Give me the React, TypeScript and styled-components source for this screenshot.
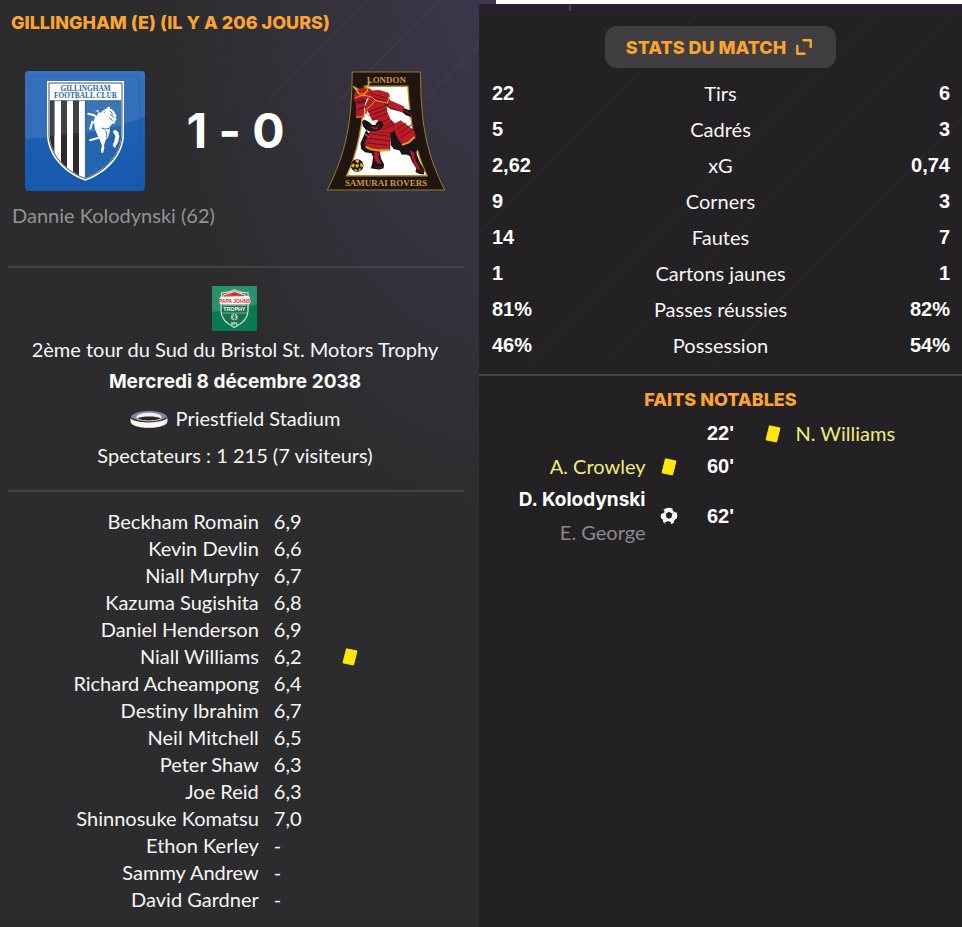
import React from "react";
import styled, { createGlobalStyle } from "styled-components";

const GlobalStyle = createGlobalStyle`
  *, *::before, *::after { box-sizing: border-box; }
  html, body, #root { min-height: 100vh; }
  body {
    margin: 0;
    background: #29282b;
    color: #f8f6f4;
    font-family: Lato, sans-serif;
    font-size: 20px;
    font-variant-ligatures: none;
    line-height: 27px;
  }
  h1, h2, p, ul { margin: 0; padding: 0; }
`;

const Page = styled.div`
  display: grid;
  grid-template-columns: 479fr 483fr;
  min-height: 100vh;
`;

const MatchPanel = styled.main`
  padding: 9px 15px 12px 8px;
  background:
    linear-gradient(135deg, transparent 258px, #ffffff06 260px, transparent 262px, transparent 309px, #ffffff08 311px, transparent 313px, transparent 369px, #ffffff07 371px, transparent 373px) 0 0 / 100% 100px no-repeat,
    radial-gradient(ellipse 330px 520px at 104% 0, #3c364e 0%, #36333f 40%, #2c2c2e 100%);
`;

const DetailColumn = styled.div`
  display: flex;
  flex-direction: column;
`;

const TopEdge = styled.div`
  height: 4px;
  margin-left: 17px;
  background: #fff;
`;

const EdgeRow = styled.div`
  background: #3c374c;
`;

const DetailPanel = styled.aside`
  flex: 1;
  padding-top: 22px;
  background:
    linear-gradient(#4a474c, #4a474c) 90px 0 / 2px 7px no-repeat,
    linear-gradient(#291f31, #29213000) 0 0 / 100% 14px no-repeat,
    linear-gradient(135deg, transparent 160px, #ffffff04 162px, transparent 164px, transparent 286px, #ffffff04 288px, transparent 290px, transparent 344px, #ffffff03 346px, transparent 348px, transparent 420px, #ffffff04 422px, transparent 424px) 0 0 / 100% 360px no-repeat,
    #232124;
`;

const Heading = styled.h1`
  padding-left: 3px;
  color: #ffa42e;
  font-family: Inter, sans-serif;
  font-size: 18px;
  font-weight: 800;
  line-height: 28px;
`;

const SectionHeading = styled(Heading).attrs({ as: "h2" })`
  padding: 10px 0 0;
  text-align: center;
`;

const ScoreRow = styled.div`
  display: flex;
  align-items: center;
  justify-content: space-between;
  padding: 0 18px 0 17px;
  margin-top: 34px;
`;

const Score = styled.p`
  font-family: Inter, sans-serif;
  font-size: 48px;
  font-weight: 700;
  line-height: 60px;
  color: #fff;
`;

const Scorer = styled.p`
  padding: 11px 4px 37px;
  color: #949395;
`;

const Rule = styled.hr`
  height: 2px;
  margin: 0;
  border: 0;
  background: #434245;
`;

const Venue = styled.section`
  display: flex;
  flex-direction: column;
  align-items: center;
  gap: 10px;
  padding: 18px 2px 21px 0;
  text-align: center;
`;

const Competition = styled.div`
  display: flex;
  flex-direction: column;
  align-items: center;
  gap: 5px;
`;

const MatchDate = styled.strong`
  font-family: Inter, sans-serif;
  font-size: 19px;
  font-weight: 700;
  color: #fff;
`;

const Stadium = styled.p`
  display: flex;
  align-items: center;
  gap: 8px;
`;

const Players = styled.table`
  width: 100%;
  margin-top: 16px;
  border-collapse: collapse;
  table-layout: fixed;

  th, td { padding: 0; height: 27px; font-weight: 400; text-align: left; }
  th { width: 55%; text-align: right; }
  td:nth-child(2) { width: 18%; padding-left: 15px; }
  svg { display: block; }
`;

const StatsButton = styled.button`
  display: flex;
  align-items: center;
  gap: 10px;
  height: 42px;
  margin: 0 auto;
  padding: 0 24px 0 21px;
  border: 0;
  border-radius: 12px;
  background: #403e40;
  color: #ffa42e;
  font-family: Inter, sans-serif;
  font-size: 18px;
  font-weight: 800;
`;

const Stats = styled.table`
  width: 100%;
  margin: 7px 0 11px;
  border-collapse: collapse;
  table-layout: fixed;

  th, td { height: 36px; padding: 0; }
  th { font-weight: 400; text-align: center; }
  td {
    width: 25%;
    padding: 0 12px 0 13px;
    font-family: "Liberation Sans", Arial, sans-serif;
    font-weight: 700;
    color: #fff;
  }
  td:last-child { text-align: right; }
`;

const Facts = styled.ul`
  list-style: none;
  margin-top: 3px;
`;

const Fact = styled.li`
  display: grid;
  grid-template-columns: 1fr 46px 58px 46px 1fr;
  align-items: center;
  line-height: 33px;
`;

const FactSide = styled.div<{ $home?: boolean }>`
  grid-column: ${(p) => (p.$home ? 1 : 5)};
  text-align: ${(p) => (p.$home ? "right" : "left")};
`;

const FactIcon = styled.span<{ $home?: boolean }>`
  grid-column: ${(p) => (p.$home ? 2 : 4)};
  display: flex;
  justify-content: center;
`;

const Minute = styled.time`
  grid-column: 3;
  grid-row: 1;
  font-family: "Liberation Sans", Arial, sans-serif;
  font-weight: 700;
  text-align: center;
  color: #fff;
`;

const FactName = styled.p`
  color: #efeb7c;
`;

const GoalScorer = styled(FactName)`
  font-family: Inter, sans-serif;
  font-size: 19px;
  font-weight: 700;
  color: #fff;
`;

const Assist = styled(FactName)`
  color: #8b898c;
`;

function CardIcon() {
  return (
    <svg width="18" height="20" viewBox="0 0 18 20" role="img" aria-label="Carton jaune">
      <path d="M5.5 1.8 16 4 12.5 18 2 15.8Z" fill="#ffe70b" stroke="#ffe70b" strokeWidth="1" strokeLinejoin="round" />
    </svg>
  );
}

function BallIcon() {
  return (
    <svg width="18" height="18" viewBox="0 0 54 54" role="img" aria-label="But">
      <circle cx="27" cy="27" r="25" fill="#fbf7f2" />
      <g fill="#19171b">
        <path d="m18 20 9-6 10 6-3 12-7 3-8-4Z" />
        <path d="M1 14 10 8l4 5-4 6-9 3ZM39 3l10 9 1 5-8-3-5-6ZM15 45l10-2 8 3-2 8H19ZM1 32l8 6-1 8-7-4ZM46 37l7-4v10l-9 6-3-5Z" />
        <path d="m12 14 7 7M37 20l7-6M34 31l9 8M20 31l-9 7" stroke="#6c696d" strokeWidth="1" />
      </g>
    </svg>
  );
}

function ExpandIcon() {
  return (
    <svg width="16" height="16" viewBox="0 0 16 16" fill="none" stroke="#ffa42e" strokeWidth="2.4" strokeLinecap="round" strokeLinejoin="round" aria-hidden="true">
      <path d="M7.5 1.3h7.2V8M1.3 7v7.7H8.5" />
    </svg>
  );
}

function StadiumIcon() {
  return (
    <svg width="38" height="18" viewBox="0 0 114 54" aria-hidden="true">
      <path d="M2 23C4 -4 110 -4 112 23V34C108 59 5 59 2 34Z" fill="#8580ae" />
      <path d="M2 24C20 42 94 42 112 24V35C108 59 5 59 2 35Z" fill="#fcf8ed" />
      <path d="M2 21C20 38 94 38 112 21L111 25C94 40 20 40 3 26Z" fill="#26242b" />
      <ellipse cx="57" cy="21" rx="38" ry="13" fill="#f6f0e8" />
      <path d="M22 25C37 18 79 18 92 25 80 34 34 34 22 25Z" fill="#29282b" />
    </svg>
  );
}

function GillinghamBadge() {
  return (
    <svg width="120" height="120" viewBox="30 33 360 360" role="img" aria-label="Gillingham Football Club">
      <defs>
        <clipPath id="gill-shield">
          <path d="M104 70H319V222C319 282 271 331 211 354 151 331 104 282 104 222Z" />
        </clipPath>
        <linearGradient id="gill-blue" x1="0" y1="0" x2="0" y2="1">
          <stop stopColor="#2566b6" />
          <stop offset="1" stopColor="#1659ad" />
        </linearGradient>
      </defs>
      <rect x="30" y="33" width="360" height="360" rx="12" fill="url(#gill-blue)" />
      <path d="M42 33H378Q390 33 390 45V170C300 205 170 230 30 236V45Q30 33 42 33Z" fill="#3b76bd" opacity=".75" />
      <rect x="47" y="49" width="327" height="327" fill="none" stroke="#194f94" strokeWidth="1.5" opacity=".6" />
      <path d="M96 63H327V222C327 286 275 340 211 362 147 340 96 286 96 222Z" fill="#fff" />
      <path d="M102 69H321V222C321 282 272 333 211 356 150 333 102 282 102 222Z" fill="#fff" stroke="#42515e" strokeWidth="3" />
      <g clipPath="url(#gill-shield)">
        <path d="M104 122h14v240h-14ZM138 122h18v240h-18ZM174 122h18v240h-18Z" fill="#2d2b2c" />
        <path d="M211 122h110v240H211Z" fill="#2564ae" />
        <path d="M104 122h14v105h-14ZM138 122h18v102h-18ZM174 122h18v98h-18Z" fill="#414244" />
        <path d="M211 122h110v74Q270 210 211 219Z" fill="#3b76b7" />
        <path d="M104 122H320M211 122V360" stroke="#3e4d58" strokeWidth="2" />
      </g>
      <g fill="#2b67ad" fontFamily="Liberation Serif" fontWeight="700" textAnchor="middle">
        <text x="212" y="93" fontSize="22">GILLINGHAM</text>
        <text x="211" y="115" fontSize="22">FOOTBALL CLUB</text>
      </g>
      <g fill="#fff">
        <path d="m258 158 5-6 9-5 7-6 7-1-2 6q13 2 16 14l5 7-4 6 5 7-8 3 3 7-9 1-9 10q2 8 1 16l-4 14-8 9-5 16 1 9-4 14-5-1-1-11 3-8-6-18-9-18-6-15-3-20q-2-12 6-18l8-13-1-7-10 3Z" />
        <path d="m293 214 8-5 8 6 4 13-3 17-7 12-3 8-7-9 5-13 3-14Z" />
      </g>
      <g fill="none" stroke="#fff" strokeWidth="6" strokeLinejoin="round" strokeLinecap="round">
        <path d="M254 183 238 166 220 161M255 196 232 185 226 206M265 228 246 235 225 241" />
      </g>
      <path d="M266 157h3M285 153l9 10M286 163l10 8M283 174l10 8M260 204q12 7 22 1M272 213q6 10 3 20" stroke="#2d6eae" fill="none" strokeWidth="3" />
    </svg>
  );
}

function SamuraiBadge() {
  return (
    <svg width="120" height="120" viewBox="30 26 360 362" role="img" aria-label="London Samurai Rovers">
      <path d="M108 29H314C315 179 329 270 387 385H33C91 270 107 179 108 29Z" fill="#211510" stroke="#9b7931" strokeWidth="3" />
      <path d="M145 72H276C282 180 300 275 334 342H91C124 275 142 180 145 72Z" fill="#fff" stroke="#b88d31" strokeWidth="4" />
      <g fill="#c79a3d" fontFamily="Liberation Serif" fontWeight="700" textAnchor="middle">
        <text x="211" y="61" fontSize="27">LONDON</text>
        <text x="210" y="374" fontSize="27">SAMURAI ROVERS</text>
      </g>
      <g fill="#1b1416">
        <path d="m202 100 16 2 4 16 28 11 20 12 19 5 3 17-9 1-14-5-12-10-34-8-20-17Z" />
        <path d="m144 172-6 7 2 12 9 12 16 7 23-1 14-6 4-14-9-10-13 3-3 8-13-1-9-9Z" />
        <path d="m150 205-17 39 2 17 12 10 19 3 5 11-3 22-4 12 13 3 13 1 13-4 1-12-9-17-4-20 6-17Z" />
        <path d="m229 188-7 26 2 35 9 12 18 5 6 12 17 1 8 4 7 17 12 19-2 12 12 6 13 1 2-13-13-22-10-24-1-10 5-10-1-25-22-22Z" />
      </g>
      <g fill="#bd1c27" stroke="#681620" strokeWidth="1.5" strokeLinejoin="round">
        <path d="m112 109 4-19 13-11 17-4 17 6 12 18-4 13-17-5-7 12-4 22 1 24-24 4-1-49Z" />
        <path d="m164 86 25-2 27 8 5 9-10 25-19-7-19 2-15 13-9 22-3-22 11-23 13-5Z" />
        <path d="m153 140 14-17 24-7 21 14 1 20 10 22 17 15-6 20-14 8-30-1-13-6-6-14 12 1 6-14-5-9-15 3Z" />
        <path d="m213 111 24 11 26 11-1 17-20-6-26-10Z" />
        <path d="m164 205 25 7 33-1v54l-36 3-39-15-1-10Z" />
        <path d="m231 188 23-12 40 29 6 18-38 28-16-20-8-17Z" />
        <path d="m174 269 15 3-1 16 8 17-12 1-10-18ZM281 265l12 6 6 25 15 28-8-1-12-20Z" />
      </g>
      <path d="m143 174 9 5 9 10 16 2 6-12 12-3 8 10-4 13-14 7-20 2-16-7-9-11Z" fill="#1b1416" />
      <path d="m164 195 15 3 12-11M170 201l16-2" stroke="#b51f2a" strokeWidth="3" fill="none" />
      <g stroke="#65131d" strokeWidth="3" fill="none">
        <path d="m170 96 43 11M169 106l42 11M155 150l54-19M160 160l51-18M169 171l45-17M196 182l23-12M204 194l24-15M200 203l34-16M160 215l62 8M156 229l65 8M151 243l70 8M242 204l28-21M248 215l39-27M254 228l40-28" />
      </g>
      <path d="m119 111 24-4 8 7-6 13-10-2-13 3Z" fill="#891622" />
      <path d="m122 120 12 1M136 119l10-3M126 142l10-3 9-6" stroke="#231318" strokeWidth="3" />
      <g fill="none" stroke="#d9a522" strokeWidth="4" strokeLinejoin="round">
        <path d="m111 72 18 23 15 1 10-10 5-28M112 73l15 9M148 79l15-22" />
        <path d="M117 108q19-15 50-3l14 11M221 100l-8 25M120 165l22-1 5-19 14-12 17-18 34 7" strokeWidth="3" />
        <path d="m149 255 15 7 24 4 33-2M258 249l20-7 19-17" strokeWidth="6" />
        <path d="m150 155 9 6M144 215l14 10" strokeWidth="3" />
      </g>
      <path d="m265 145 15 8 9 10-9 1M181 317l-4-6M194 320l-5-6M302 321l12 3M314 330l6-6" stroke="#8b1723" strokeWidth="3" fill="none" />
      <circle cx="123" cy="311" r="19" fill="#181415" />
      <g fill="#d6ad26">
        <path d="m119 294 8 0 3 5-5 5-7-4ZM106 307l7-3 3 8-5 6-6-4ZM118 308l7-2 4 6-4 6-7-2ZM134 303l6 3 1 8-6 3-4-6ZM113 324l6-3 5 6-4 3ZM127 321l7-2-1 8-5 3Z" />
      </g>
    </svg>
  );
}

function TrophyBadge() {
  return (
    <svg width="45" height="45" viewBox="0 0 135 135" role="img" aria-label="Papa Johns Trophy">
      <rect width="135" height="135" rx="3" fill="#087b51" />
      <path d="M3 0H132Q135 0 135 3V55Q80 72 0 77V3Q0 0 3 0Z" fill="#29916c" />
      <path d="M29 21 51 18 67 11 84 18 108 21V76Q107 106 67 124 28 106 27 76Z" fill="#197151" stroke="#c9d8ca" strokeWidth="4" />
      <path d="M33 28 67 16 102 28V54H33Z" fill="#d8433d" stroke="#f4ede3" strokeWidth="3" />
      <path d="M24 32 112 30 116 49 111 55H25L20 49Z" fill="#fff" />
      <g fontFamily="Liberation Sans" fontWeight="700" textAnchor="middle">
        <text x="68" y="26" fill="#153c36" fontSize="7">2020</text>
        <text x="68" y="50" fill="#e22630" fontSize="15">PAPA JOHNS</text>
        <text x="67" y="76" fill="#fff" fontSize="16">TROPHY</text>
        <text x="68" y="116" fill="#e6f1e8" fontSize="12">EFL</text>
      </g>
      <path d="M31 58H104M31 81H104" stroke="#b5c8b6" strokeWidth="2" />
      <circle cx="67" cy="93" r="10" fill="#b8d7c5" />
      <path d="m61 88 12 10M61 98l12-10M67 84v18" stroke="#226d50" strokeWidth="3" />
    </svg>
  );
}

const players: { name: string; rating: string; booked?: boolean }[] = [
  { name: "Beckham Romain", rating: "6,9" },
  { name: "Kevin Devlin", rating: "6,6" },
  { name: "Niall Murphy", rating: "6,7" },
  { name: "Kazuma Sugishita", rating: "6,8" },
  { name: "Daniel Henderson", rating: "6,9" },
  { name: "Niall Williams", rating: "6,2", booked: true },
  { name: "Richard Acheampong", rating: "6,4" },
  { name: "Destiny Ibrahim", rating: "6,7" },
  { name: "Neil Mitchell", rating: "6,5" },
  { name: "Peter Shaw", rating: "6,3" },
  { name: "Joe Reid", rating: "6,3" },
  { name: "Shinnosuke Komatsu", rating: "7,0" },
  { name: "Ethon Kerley", rating: "-" },
  { name: "Sammy Andrew", rating: "-" },
  { name: "David Gardner", rating: "-" },
];

const stats = [
  ["22", "Tirs", "6"],
  ["5", "Cadrés", "3"],
  ["2,62", "xG", "0,74"],
  ["9", "Corners", "3"],
  ["14", "Fautes", "7"],
  ["1", "Cartons jaunes", "1"],
  ["81%", "Passes réussies", "82%"],
  ["46%", "Possession", "54%"],
];

export default function App() {
  return (
    <>
      <GlobalStyle />
      <Page>
        <MatchPanel>
          <Heading>GILLINGHAM (E) (IL Y A 206 JOURS)</Heading>
          <ScoreRow>
            <GillinghamBadge />
            <Score>1 - 0</Score>
            <SamuraiBadge />
          </ScoreRow>
          <Scorer>Dannie Kolodynski (62)</Scorer>
          <Rule />
          <Venue>
            <Competition>
              <TrophyBadge />
              <p>2ème tour du Sud du Bristol St. Motors Trophy</p>
              <MatchDate>Mercredi 8 décembre 2038</MatchDate>
            </Competition>
            <Stadium>
              <StadiumIcon />
              Priestfield Stadium
            </Stadium>
            <p>Spectateurs : 1 215 (7 visiteurs)</p>
          </Venue>
          <Rule />
          <Players>
            <tbody>
              {players.map((p) => (
                <tr key={p.name}>
                  <th scope="row">{p.name}</th>
                  <td>{p.rating}</td>
                  <td>{p.booked && <CardIcon />}</td>
                </tr>
              ))}
            </tbody>
          </Players>
        </MatchPanel>
        <DetailColumn>
          <EdgeRow>
            <TopEdge />
          </EdgeRow>
          <DetailPanel>
            <StatsButton type="button">
              STATS DU MATCH
              <ExpandIcon />
            </StatsButton>
            <Stats>
              <tbody>
                {stats.map(([home, label, away]) => (
                  <tr key={label}>
                    <td>{home}</td>
                    <th scope="row">{label}</th>
                    <td>{away}</td>
                  </tr>
                ))}
              </tbody>
            </Stats>
            <Rule />
            <SectionHeading>FAITS NOTABLES</SectionHeading>
            <Facts>
              <Fact>
                <Minute>22'</Minute>
                <FactIcon><CardIcon /></FactIcon>
                <FactSide><FactName>N. Williams</FactName></FactSide>
              </Fact>
              <Fact>
                <FactSide $home><FactName>A. Crowley</FactName></FactSide>
                <FactIcon $home><CardIcon /></FactIcon>
                <Minute>60'</Minute>
              </Fact>
              <Fact>
                <FactSide $home>
                  <GoalScorer>D. Kolodynski</GoalScorer>
                  <Assist>E. George</Assist>
                </FactSide>
                <FactIcon $home><BallIcon /></FactIcon>
                <Minute>62'</Minute>
              </Fact>
            </Facts>
          </DetailPanel>
        </DetailColumn>
      </Page>
    </>
  );
}
